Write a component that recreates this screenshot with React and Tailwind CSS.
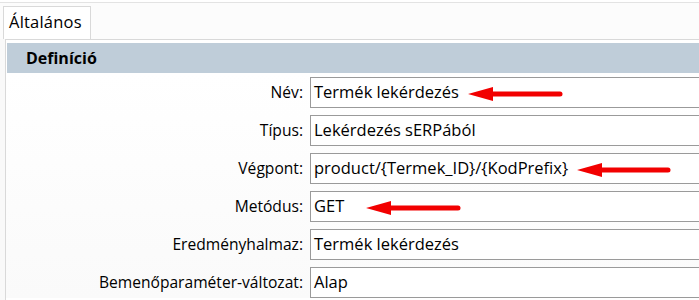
import React from "react";

function Arrow({ left, tail, top }) {
  return (
    <svg
      className="absolute"
      style={{ left, top }}
      width={tail + 4}
      height="16"
      viewBox={`0 0 ${tail + 4} 16`}
    >
      <polygon points="0,8 25,1 25,15" fill="#f20000" />
      <line x1="22" y1="8" x2={tail} y2="8" stroke="#f20000" strokeWidth="5" strokeLinecap="round" />
    </svg>
  );
}

const rows = [
  { label: "Név:", value: "Termék lekérdezés", arrow: { left: 157, tail: 92 } },
  { label: "Típus:", value: "Lekérdezés sERPából" },
  { label: "Végpont:", value: "product/{Termek_ID}/{KodPrefix}", arrow: { left: 266, tail: 91 } },
  { label: "Metódus:", value: "GET", arrow: { left: 55, tail: 92 } },
  { label: "Eredményhalmaz:", value: "Termék lekérdezés" },
  { label: "Bemenőparaméter-változat:", value: "Alap" },
];

export default function App() {
  return (
    <div
      className="w-[699px] h-[300px] overflow-hidden bg-[#f9f9f9] text-black"
      style={{ fontFamily: '"Open Sans", "Noto Sans", sans-serif' }}
    >
      <div className="h-[2px] bg-white" />
      <div className="h-[1px] bg-[#e3e3e3]" />
      <div className="flex pl-[3px] pt-[3px] bg-[#fcfcfc]">
        <div className="h-[33px] w-[88px] border border-b-0 border-[#d9d9d9] bg-white pl-[5px] pt-[2px] text-[16.5px] leading-[26px] tracking-[0.2px]">
          Általános
        </div>
      </div>
      <div className="ml-[5px] border-l border-t border-[#d9d9d9] bg-white h-[262px]">
        <div className="mt-[3px] ml-[1px] h-[30px] bg-[#bfcdd9] pl-[19px] text-[16px] font-bold leading-[30px]">
          Definíció
        </div>
        <div className="grid grid-cols-[297px_1fr] gap-x-[7px] gap-y-[7px] pt-[4px] bg-gradient-to-b from-white to-[#fafafa]">
          {rows.map((r) => (
            <React.Fragment key={r.label}>
              <div className="h-[31px] text-right text-[15.6px] leading-[31px] whitespace-nowrap">
                {r.label}
              </div>
              <div className="relative h-[31px] w-[400px] border border-[#9a9a9a] bg-white pl-[3px] text-[16.5px] leading-[28px] whitespace-nowrap">
                {r.value}
                {r.arrow && <Arrow left={r.arrow.left} tail={r.arrow.tail} top={8} />}
              </div>
            </React.Fragment>
          ))}
        </div>
      </div>
    </div>
  );
}
